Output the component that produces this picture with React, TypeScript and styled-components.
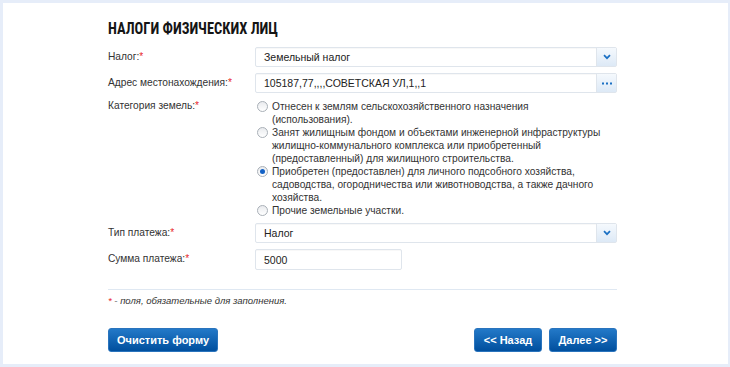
import { Fragment } from 'react';
import styled, { createGlobalStyle } from 'styled-components';

const sans = `'Liberation Sans', Arial, sans-serif`;

const GlobalStyle = createGlobalStyle`
  html, body {
    margin: 0;
    padding: 0;
    background: #e6edf9;
    font-family: ${sans};
    font-size: 10.5px;
    color: #333;
  }
`;

type RadioItem = { lines: string[]; checked?: boolean };

const landCategories: RadioItem[] = [
  { lines: ['Отнесен к землям сельскохозяйственного назначения', '(использования).'] },
  {
    lines: [
      'Занят жилищным фондом и объектами инженерной инфраструктуры',
      'жилищно-коммунального комплекса или приобретенный',
      '(предоставленный) для жилищного строительства.',
    ],
  },
  {
    lines: [
      'Приобретен (предоставлен) для личного подсобного хозяйства,',
      'садоводства, огородничества или животноводства, а также дачного',
      'хозяйства.',
    ],
    checked: true,
  },
  { lines: ['Прочие земельные участки.'] },
];

const ChevronIcon = () => (
  <svg width="8" height="6" viewBox="0 0 8 6">
    <path d="M1 1.2 L4 4.2 L7 1.2" fill="none" stroke="#1b70c4" strokeWidth="1.7" />
  </svg>
);

const DotsIcon = () => (
  <svg width="10" height="3" viewBox="0 0 10 3">
    <rect x="0" y="0.5" width="2" height="2" fill="#1b70c4" />
    <rect x="4" y="0.5" width="2" height="2" fill="#1b70c4" />
    <rect x="8" y="0.5" width="2" height="2" fill="#1b70c4" />
  </svg>
);

const Required = () => <Star>*</Star>;

const App = () => {
  return (
    <>
      <GlobalStyle />
      <Panel>
        <TitleRow>
          <Title>НАЛОГИ ФИЗИЧЕСКИХ ЛИЦ</Title>
        </TitleRow>
        <FormGrid>
          <Label>
            Налог:<Required />
          </Label>
          <Field $width={362}>
            <FieldText>Земельный налог</FieldText>
            <FieldButton>
              <ChevronIcon />
            </FieldButton>
          </Field>

          <Label>
            Адрес местонахождения:<Required />
          </Label>
          <Field $width={362}>
            <FieldText>105187,77,,,,СОВЕТСКАЯ УЛ,1,,1</FieldText>
            <FieldButton>
              <DotsIcon />
            </FieldButton>
          </Field>

          <Label $tight>
            Категория земель:<Required />
          </Label>
          <RadioList>
            {landCategories.map((item) => (
              <RadioRow key={item.lines[0]}>
                <RadioCircle $checked={item.checked} />
                <RadioText>
                  {item.lines.map((line, i) => (
                    <Fragment key={line}>
                      {i > 0 && <br />}
                      {line}
                    </Fragment>
                  ))}
                </RadioText>
              </RadioRow>
            ))}
          </RadioList>

          <Label>
            Тип платежа:<Required />
          </Label>
          <Field $width={362}>
            <FieldText>Налог</FieldText>
            <FieldButton>
              <ChevronIcon />
            </FieldButton>
          </Field>

          <Label>
            Сумма платежа:<Required />
          </Label>
          <Field $width={147} $height={21}>
            <FieldText>5000</FieldText>
          </Field>
        </FormGrid>

        <Divider />

        <Footnote>
          <Star>*</Star> - поля, обязательные для заполнения.
        </Footnote>

        <ButtonBar>
          <BlueButton $width={110}>Очистить форму</BlueButton>
          <ButtonGroup>
            <BlueButton $width={68}>&lt;&lt; Назад</BlueButton>
            <BlueButton $width={68}>Далее &gt;&gt;</BlueButton>
          </ButtonGroup>
        </ButtonBar>
      </Panel>
    </>
  );
};

export default App;

const Panel = styled.div`
  box-sizing: border-box;
  margin: 3px 2px 0 3px;
  height: 361px;
  background: #ffffff;
  padding: 15px 111px 0 105px;
  display: flex;
  flex-direction: column;
  font-family: ${sans};
`;

const TitleRow = styled.div`
  height: 18px;
  padding-top: 1px;
`;

const Title = styled.h1`
  display: inline-block;
  margin: 0;
  font-family: 'Roboto Condensed', 'DejaVu Sans Condensed', sans-serif;
  font-weight: bold;
  font-size: 17px;
  line-height: 18px;
  color: #151515;
  transform: scaleX(0.85);
  transform-origin: left center;
`;

const FormGrid = styled.div`
  margin-top: 10px;
  display: grid;
  grid-template-columns: 147px 362px;
  row-gap: 6px;
  align-items: start;
`;

const Label = styled.div<{ $tight?: boolean }>`
  font-family: ${sans};
  line-height: ${({ $tight }) => ($tight ? '13px' : '20px')};
  color: #333;
  font-size: 10.2px;
`;

const Star = styled.span`
  color: #e8262b;
`;

const Field = styled.div<{ $width: number; $height?: number }>`
  box-sizing: border-box;
  width: ${({ $width }) => $width}px;
  height: ${({ $height }) => $height ?? 20}px;
  display: flex;
  align-items: stretch;
  border: 1px solid #dfe5ec;
  border-radius: 2px;
  background: #fff;
  box-shadow: inset 0 1px 1px rgba(0, 0, 0, 0.03);
`;

const FieldText = styled.div`
  flex: 1;
  padding-left: 8px;
  display: flex;
  align-items: center;
  font-family: ${sans};
  font-size: 10.5px;
  color: #222;
`;

const FieldButton = styled.div`
  width: 19px;
  display: flex;
  align-items: center;
  justify-content: center;
  border-left: 1px solid #dfe5ec;
  background: linear-gradient(#f5f9fd, #dde9f6);
`;

const RadioList = styled.div`
  display: flex;
  flex-direction: column;
  margin-top: 1px;
`;

const RadioRow = styled.div`
  display: flex;
  align-items: flex-start;
  gap: 4px;
  padding-left: 2px;
`;

const RadioCircle = styled.span<{ $checked?: boolean }>`
  position: relative;
  flex: none;
  box-sizing: border-box;
  width: 11px;
  height: 11px;
  margin-top: 1px;
  border-radius: 50%;
  border: 1px solid #a9b0b7;
  background: linear-gradient(#e9ebee, #ffffff);

  &::after {
    content: '';
    display: ${({ $checked }) => ($checked ? 'block' : 'none')};
    position: absolute;
    left: 2px;
    top: 2px;
    width: 5px;
    height: 5px;
    border-radius: 50%;
    background: #1462c6;
  }
`;

const RadioText = styled.span`
  font-family: ${sans};
  font-size: 10.2px;
  line-height: 13px;
  color: #333;
  white-space: nowrap;
`;

const Divider = styled.div`
  margin-top: 19px;
  height: 1px;
  background: #dfe8f2;
`;

const Footnote = styled.div`
  margin-top: 5px;
  font-family: ${sans};
  font-size: 9.5px;
  line-height: 12px;
  font-style: italic;
  color: #333;
`;

const ButtonBar = styled.div`
  margin-top: 21px;
  display: flex;
  justify-content: space-between;
`;

const ButtonGroup = styled.div`
  display: flex;
  gap: 7px;
`;

const BlueButton = styled.button<{ $width: number }>`
  box-sizing: border-box;
  width: ${({ $width }) => $width}px;
  height: 24px;
  padding: 0;
  border: 1px solid #2a74bd;
  border-radius: 3px;
  background: linear-gradient(#2379c8, #004f9e);
  color: #fff;
  font-family: ${sans};
  font-weight: bold;
  font-size: 11px;
  cursor: pointer;
`;
